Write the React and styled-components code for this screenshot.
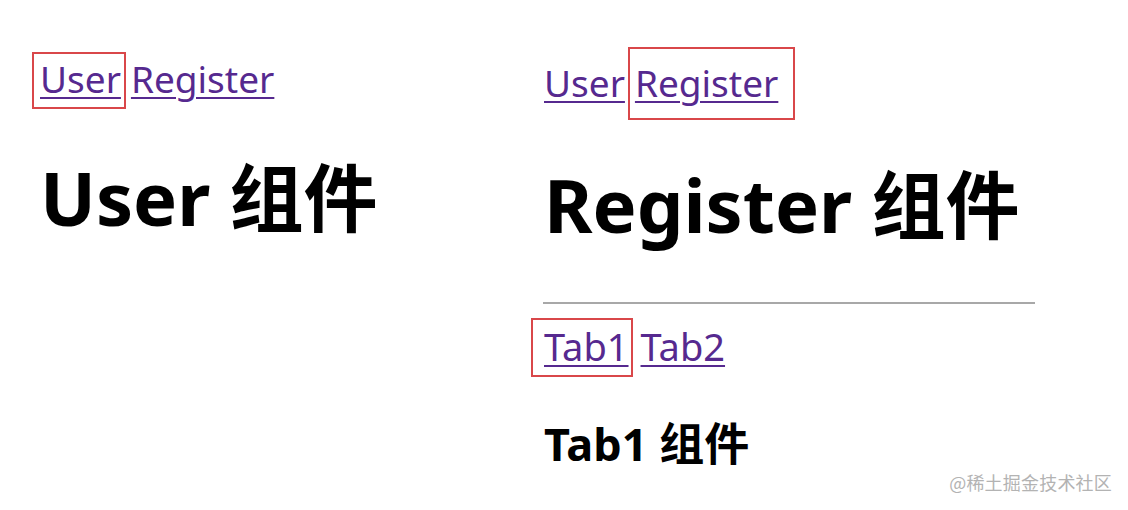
import React from "react";
import styled, { createGlobalStyle } from "styled-components";

const Global = createGlobalStyle`
  html, body { margin: 0; padding: 0; background: #ffffff; }
  body {
    width: 1128px;
    height: 510px;
    overflow: hidden;
    font-family: "Noto Sans", "Noto Sans CJK SC", sans-serif;
    color: #000;
  }
`;

const Page = styled.div`
  position: relative;
  display: flex;
  width: 1128px;
  height: 510px;
`;

const Panel = styled.section`
  display: flex;
  flex-direction: column;
  align-items: flex-start;
  box-sizing: border-box;
  width: ${(p) => p.$width}px;
  padding-left: 40px;
  padding-top: ${(p) => p.$top}px;
`;

const Nav = styled.nav`
  display: flex;
  align-items: baseline;
  gap: ${(p) => p.$gap || 10}px;
  font-size: ${(p) => p.$size || 37}px;
  line-height: 49px;
  margin-top: ${(p) => p.$mt || 0}px;
`;

const Link = styled.a`
  color: #56298f;
  text-decoration: underline;
  text-decoration-thickness: 2px;
  text-underline-offset: 4px;
  cursor: pointer;
`;

const Marked = styled.span`
  position: relative;
  display: inline-block;
  &::after {
    content: "";
    position: absolute;
    top: ${(p) => p.$t}px;
    left: ${(p) => p.$l}px;
    right: ${(p) => p.$r}px;
    bottom: ${(p) => p.$b}px;
    border: 2px solid #d9474a;
    pointer-events: none;
  }
`;

const Title = styled.h1`
  margin: ${(p) => p.$mt}px 0 0;
  font-size: 74px;
  font-weight: 700;
  line-height: 1.2;
  white-space: nowrap;
`;

const SubTitle = styled.h3`
  margin: ${(p) => p.$mt}px 0 0;
  font-size: 45px;
  font-weight: 700;
  line-height: 1.2;
  white-space: nowrap;
`;

const Rule = styled.hr`
  width: 492px;
  margin: 52px 0 0 -1px;
  border: none;
  border-top: 2px solid #a8a8a8;
  height: 0;
`;

const Watermark = styled.div`
  position: absolute;
  right: 16px;
  bottom: 15px;
  font-family: "Noto Sans CJK SC", "Noto Sans", sans-serif;
  font-size: 18px;
  color: #b3b3b3;
  letter-spacing: 0.2px;
`;

export default function App() {
  return (
    <>
      <Global />
      <Page>
        <Panel $width={504} $top={54}>
          <Nav $gap={10}>
            <Marked $t={-2} $l={-8} $r={-5} $b={-6}>
              <Link>User</Link>
            </Marked>
            <Link>Register</Link>
          </Nav>
          <Title $mt={51}>User 组件</Title>
        </Panel>
        <Panel $width={624} $top={58}>
          <Nav $gap={10}>
            <Link>User</Link>
            <Marked $t={-11} $l={-7} $r={-17} $b={-13}>
              <Link>Register</Link>
            </Marked>
          </Nav>
          <Title $mt={54}>Register 组件</Title>
          <Rule />
          <Nav $gap={12} $size={38} $mt={18}>
            <Marked $t={-4} $l={-13} $r={-4} $b={-6}>
              <Link>Tab1</Link>
            </Marked>
            <Link>Tab2</Link>
          </Nav>
          <SubTitle $mt={46}>Tab1 组件</SubTitle>
        </Panel>
        <Watermark>@稀土掘金技术社区</Watermark>
      </Page>
    </>
  );
}
